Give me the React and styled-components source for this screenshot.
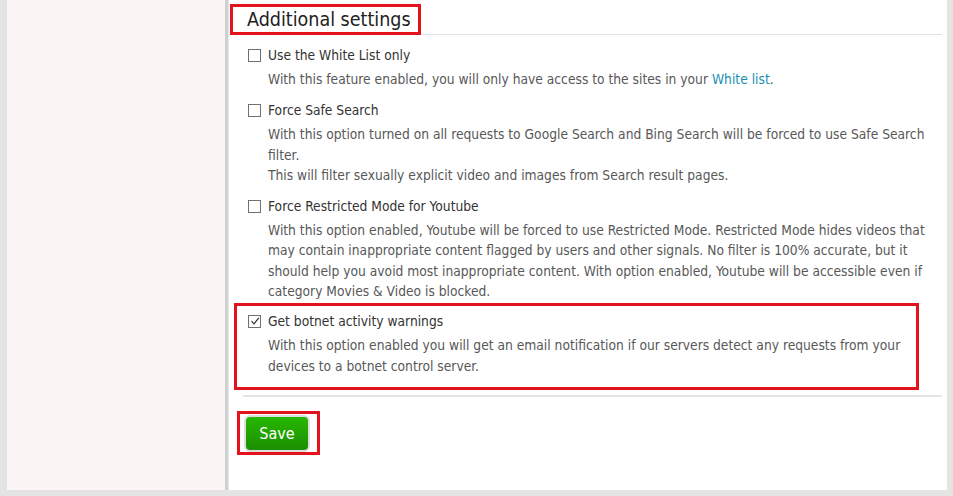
import React from "react";
import styled, { createGlobalStyle } from "styled-components";

const GlobalStyle = createGlobalStyle`
  html, body {
    margin: 0;
    padding: 0;
    background: #e4e4e4;
  }
  body {
    font-family: "DejaVu Sans Condensed", "DejaVu Sans", sans-serif;
  }
`;

const Page = styled.div`
  display: flex;
  height: 490px;
  padding: 0 6px 0 7px;
  overflow: hidden;
`;

const Sidebar = styled.div`
  width: 218px;
  flex-shrink: 0;
  background: #fbf5f5;
`;

const Content = styled.div`
  flex: 1;
  background: #fff;
  border-left: 3px solid #cfcfcf;
  box-shadow: inset 1px 0 0 #eaeaea;
`;

const Header = styled.div`
  margin: 4px 5px 0 2px;
  border-bottom: 1px solid #e2e2e2;
  display: flex;
`;

const Title = styled.h2`
  margin: 0 0 -1px;
  border: 3px solid #e3131e;
  padding: 0 7px 0 14px;
  height: 25px;
  font-size: 19.5px;
  line-height: 26px;
  font-weight: normal;
  color: #222;
`;

const List = styled.div`
  padding: 7px 0 0 6px;
`;

const Item = styled.div`
  border: 3px solid ${p => (p.$highlight ? "#e3131e" : "transparent")};
  padding: ${p => (p.$highlight ? "5px 11px 11px" : "0 11px")};
  margin-top: ${p => (p.$highlight ? "-1px" : "5px")};
  margin-right: ${p => (p.$highlight ? "28px" : "0")};
  &:first-child {
    margin-top: 0;
  }
`;

const Label = styled.label`
  display: flex;
  align-items: center;
  gap: 7px;
  height: 20px;
  font-size: 13.7px;
  color: #333;
`;

const Box = styled.span`
  width: 11px;
  height: 11px;
  border: 1px solid #6f6f6f;
  background: #fff;
  display: flex;
  align-items: center;
  justify-content: center;
  flex-shrink: 0;
`;

const Desc = styled.p`
  margin: 4px 0 0 20px;
  font-size: 13.7px;
  line-height: 20.3px;
  color: #585858;
`;

const Link = styled.a`
  color: #1b8fb3;
  text-decoration: none;
`;

const Separator = styled.div`
  height: 2px;
  background: #e4e4e4;
  margin: 5px 5px 0 15px;
`;

const SaveArea = styled.div`
  padding: 14px 0 0 9px;
`;

const SaveBox = styled.div`
  display: inline-flex;
  border: 3px solid #e3131e;
  padding: 0 9px 0 6px;
`;

const SaveButton = styled.button`
  width: 62px;
  height: 33px;
  margin: 3px 0 2px;
  border: none;
  border-radius: 4px;
  box-shadow: 0 0 0 2px #dedede;
  background: linear-gradient(#27b800, #1c8e00);
  color: #fff;
  font-family: "DejaVu Sans Condensed", "DejaVu Sans", sans-serif;
  font-size: 16px;
  cursor: pointer;
`;

const Checkbox = ({ checked }) => (
  <Box>
    {checked && (
      <svg width="10" height="10" viewBox="0 0 10 10">
        <path d="M1.5 5.2 L4 7.8 L8.8 1.8" fill="none" stroke="#333" strokeWidth="1.2" />
      </svg>
    )}
  </Box>
);

const options = [
  {
    label: "Use the White List only",
    desc: (
      <>
        With this feature enabled, you will only have access to the sites in your <Link href="#">White list</Link>.
      </>
    )
  },
  {
    label: "Force Safe Search",
    desc: (
      <>
        With this option turned on all requests to Google Search and Bing Search will be forced to use Safe Search filter.
        <br />
        This will filter sexually explicit video and images from Search result pages.
      </>
    )
  },
  {
    label: "Force Restricted Mode for Youtube",
    desc: (
      <>
        With this option enabled, Youtube will be forced to use Restricted Mode. Restricted Mode hides videos that may contain inappropriate content flagged by users and other signals. No filter is 100% accurate, but it should help you avoid most inappropriate content. With option enabled, Youtube will be accessible even if category Movies &amp; Video is blocked.
      </>
    )
  },
  {
    label: "Get botnet activity warnings",
    checked: true,
    highlight: true,
    desc: (
      <>
        With this option enabled you will get an email notification if our servers detect any requests from your devices to a botnet control server.
      </>
    )
  }
];

export default function App() {
  return (
    <>
      <GlobalStyle />
      <Page>
        <Sidebar />
        <Content>
          <Header>
            <Title>Additional settings</Title>
          </Header>
          <List>
            {options.map(o => (
              <Item key={o.label} $highlight={o.highlight}>
                <Label>
                  <Checkbox checked={o.checked} />
                  {o.label}
                </Label>
                <Desc>{o.desc}</Desc>
              </Item>
            ))}
          </List>
          <Separator />
          <SaveArea>
            <SaveBox>
              <SaveButton>Save</SaveButton>
            </SaveBox>
          </SaveArea>
        </Content>
      </Page>
    </>
  );
}
